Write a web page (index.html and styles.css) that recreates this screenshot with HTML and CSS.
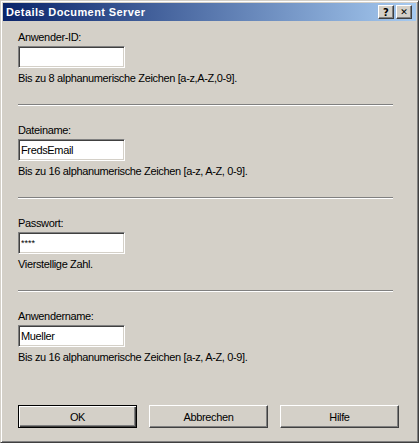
FILE: index.html
```html
<!DOCTYPE html>
<html lang="de">
  <head>
    <meta charset="UTF-8" />
    <title>Details Document Server</title>
    <link rel="stylesheet" href="styles.css">
  </head>
  <body>
    <div class="window">
      <div class="titlebar">
        <span class="title">Details Document Server</span>
        <div class="caption-buttons">
          <button class="caption-btn">?</button>
          <button class="caption-btn close">&#x2715;</button>
        </div>
      </div>
      <div class="content">
        <div class="field">
          <label>Anwender-ID:</label>
          <input type="text" value="" />
          <p class="hint">Bis zu 8 alphanumerische Zeichen [a-z,A-Z,0-9].</p>
        </div>
        <hr class="sep" />
        <div class="field">
          <label>Dateiname:</label>
          <input type="text" value="FredsEmail" />
          <p class="hint">Bis zu 16 alphanumerische Zeichen [a-z, A-Z, 0-9].</p>
        </div>
        <hr class="sep" />
        <div class="field">
          <label>Passwort:</label>
          <input type="text" class="secret" value="****" />
          <p class="hint">Vierstellige Zahl.</p>
        </div>
        <hr class="sep" />
        <div class="field">
          <label>Anwendername:</label>
          <input type="text" value="Mueller" />
          <p class="hint">Bis zu 16 alphanumerische Zeichen [a-z, A-Z, 0-9].</p>
        </div>
        <div class="buttons">
          <button class="btn default">OK</button>
          <button class="btn">Abbrechen</button>
          <button class="btn">Hilfe</button>
        </div>
      </div>
    </div>
  </body>
</html>
```

FILE: styles.css
```css
body {
  margin: 0;
  background: #d4d0c8;
  font-family: "Liberation Sans", Arial, sans-serif;
  font-size: 11px;
  color: #000;
}
.window {
  width: 419px;
  height: 443px;
  box-sizing: border-box;
  background: #d4d0c8;
  border: 1px solid;
  border-color: #d4d0c8 #404040 #404040 #d4d0c8;
  box-shadow: inset 1px 1px #fff, inset -1px -1px #808080;
  padding: 2px;
  display: flex;
  flex-direction: column;
}
.titlebar {
  height: 18px;
  display: flex;
  align-items: center;
  justify-content: space-between;
  padding: 0 2px 0 3px;
  background: linear-gradient(to right, #0a246a, #a6caf0);
  color: #fff;
}
.title {
  font-weight: bold;
  font-size: 11px;
  letter-spacing: 0.4px;
}
.caption-buttons {
  display: flex;
  gap: 2px;
  margin-right: 2px;
}
.caption-btn {
  width: 16px;
  height: 14px;
  padding: 0;
  box-sizing: border-box;
  background: #d4d0c8;
  border: 1px solid;
  border-color: #fff #404040 #404040 #fff;
  box-shadow: inset -1px -1px #808080;
  font-family: "DejaVu Sans", sans-serif;
  font-weight: bold;
  font-size: 10px;
  line-height: 11px;
  color: #000;
}
.caption-btn.close {
  font-size: 9px;
}
.content {
  flex: 1;
  display: flex;
  flex-direction: column;
  padding: 10px 0 0 15px;
  letter-spacing: -0.35px;
}
.field label {
  display: block;
  line-height: 13px;
}
.field input {
  display: block;
  width: 107px;
  height: 22px;
  box-sizing: border-box;
  margin: 2px 0 0;
  padding: 0 2px;
  border: 1px solid;
  border-color: #808080 #fff #fff #808080;
  box-shadow: inset 1px 1px #404040, inset -1px -1px #d4d0c8;
  background: #fff;
  font-family: inherit;
  font-size: 11px;
  letter-spacing: inherit;
  color: #000;
  outline: none;
}
.field input.secret {
  font-size: 9px;
  letter-spacing: 0;
}
.hint {
  margin: 4px 0 0;
  line-height: 13px;
}
.sep {
  width: 375px;
  height: 0;
  margin: 19px 0 18px;
  border: 0;
  border-top: 1px solid #808080;
  border-bottom: 1px solid #fff;
}
.buttons {
  display: flex;
  gap: 12px;
  margin-top: 41px;
}
.btn {
  width: 119px;
  height: 23px;
  box-sizing: border-box;
  padding: 0;
  background: #d4d0c8;
  border: 1px solid;
  border-color: #fff #404040 #404040 #fff;
  box-shadow: inset -1px -1px #808080;
  font-family: inherit;
  font-size: 11px;
  letter-spacing: inherit;
  color: #000;
}
.btn.default {
  border-color: #000;
  box-shadow: inset 1px 1px #fff, inset -1px -1px #404040, inset -2px -2px #808080;
}
```
